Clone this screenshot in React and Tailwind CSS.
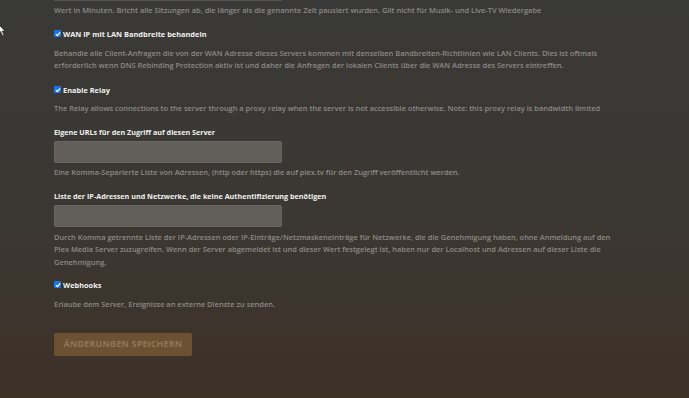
import React from "react";

function Check({ label }) {
  return (
    <div className="flex items-center h-[12px] gap-[2px]">
      <span className="w-[7px] h-[7px] bg-[#1b74e4] rounded-[1px] flex items-center justify-center shrink-0">
        <svg width="6" height="6" viewBox="0 0 10 10">
          <path d="M1.5 5.2 L4 7.6 L8.6 2.2" stroke="#fff" strokeWidth="2" fill="none" />
        </svg>
      </span>
      <span className="text-[#f0f0ee] font-bold text-[7.4px] leading-[12px]">{label}</span>
    </div>
  );
}

function Desc({ children, className = "" }) {
  return (
    <p className={"text-[#8d8a86] font-semibold text-[7.45px] leading-[12.5px] " + className}>{children}</p>
  );
}

function Label({ children, className = "" }) {
  return (
    <div className={"text-[#f0f0ee] font-bold text-[7.2px] leading-[12px] " + className}>{children}</div>
  );
}

export default function App() {
  return (
    <div
      className="relative w-[689px] h-[398px] overflow-hidden bg-gradient-to-b from-[#393937] via-[#3b3833] to-[#3d3128]"
      style={{ fontFamily: '"Open Sans", "Noto Sans", sans-serif' }}
    >
      <svg className="absolute left-0 top-[24px]" width="6" height="12" viewBox="0 0 6 12">
        <path d="M-2 0 L5 7 L2 7 L4 11 L2.5 11.5 L0.5 7.5 L-2 9 Z" fill="#fff" stroke="#222" strokeWidth="0.6" />
      </svg>
      <div className="pl-[54px] w-[616px]">
        <div className="h-[1px] w-[228px] bg-[#57534f]" />
        <Desc className="mt-[3px]">
          Wert in Minuten. Bricht alle Sitzungen ab, die länger als die genannte Zeit pausiert wurden. Gilt nicht für Musik- und Live-TV Wiedergabe
        </Desc>
        <div className="mt-[11px]">
          <Check label="WAN IP mit LAN Bandbreite behandeln" />
        </div>
        <Desc className="mt-[7px]">
          Behandle alle Client-Anfragen die von der WAN Adresse dieses Servers kommen mit denselben Bandbreiten-Richtlinien wie LAN Clients. Dies ist oftmals erforderlich wenn DNS Rebinding Protection aktiv ist und daher die Anfragen der lokalen Clients über die WAN Adresse des Servers eintreffen.
        </Desc>
        <div className="mt-[12px]">
          <Check label="Enable Relay" />
        </div>
        <Desc className="mt-[6px]">
          The Relay allows connections to the server through a proxy relay when the server is not accessible otherwise. Note: this proxy relay is bandwidth limited
        </Desc>
        <Label className="mt-[11.5px]">Eigene URLs für den Zugriff auf diesen Server</Label>
        <div className="mt-[3px] h-[22px] w-[228px] bg-[#625e5a] rounded-[2px] border border-[#6a6661]" />
        <Desc className="mt-[3px]">
          Eine Komma-Separierte Liste von Adressen, (http oder https) die auf plex.tv für den Zugriff veröffentlicht werden.
        </Desc>
        <Label className="mt-[11.5px]">Liste der IP-Adressen und Netzwerke, die keine Authentifizierung benötigen</Label>
        <div className="mt-[3px] h-[22px] w-[228px] bg-[#625e5a] rounded-[2px] border border-[#6a6661]" />
        <Desc className="mt-[4px]">
          Durch Komma getrennte Liste der IP-Adressen oder IP-Einträge/Netzmaskeneinträge für Netzwerke, die die Genehmigung haben, ohne Anmeldung auf den Plex Media Server zuzugreifen. Wenn der Server abgemeldet ist und dieser Wert festgelegt ist, haben nur der Localhost und Adressen auf dieser Liste die Genehmigung.
        </Desc>
        <div className="mt-[10.5px]">
          <Check label="Webhooks" />
        </div>
        <Desc className="mt-[7px]">Erlaube dem Server, Ereignisse an externe Dienste zu senden.</Desc>
        <div className="mt-[22.5px] h-[23px] w-[138px] bg-[#6c5232] rounded-[2px] flex items-center justify-center">
          <span className="text-[#8f7757] font-bold text-[8.9px] tracking-[0.2px] uppercase">Änderungen speichern</span>
        </div>
      </div>
    </div>
  );
}
